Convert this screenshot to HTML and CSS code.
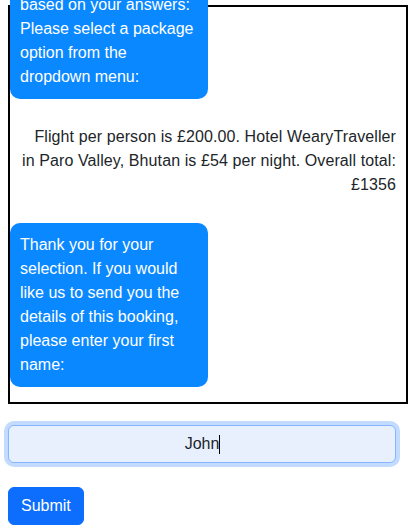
FILE: index.html
```html
<!DOCTYPE html>
<html lang="en">
<head>
<meta charset="utf-8">
<title>Booking chat</title>
<link rel="stylesheet" href="styles.css">
</head>
<body>
<main class="page">
  <section class="chat">
    <div class="msg bot">Here are the holiday packages we found for you<br>based on your answers: Please select a package option from the dropdown menu:</div>
    <div class="msg user">Flight per person is £200.00. Hotel WearyTraveller in Paro Valley, Bhutan is £54 per night. Overall total: £1356</div>
    <div class="msg bot">Thank you for your selection. If you would like us to send you the details of this booking, please enter your first name:</div>
  </section>
  <form class="reply">
    <div class="field">
      <input class="name-input" type="text" value="John">
      <span class="caret"></span>
    </div>
    <button class="submit" type="button">Submit</button>
  </form>
</main>
</body>
</html>
```
FILE: styles.css
```css
html, body {
  margin: 0;
  padding: 0;
  background: #fff;
}
body {
  font-family: "Liberation Sans", Arial, sans-serif;
  font-size: 16px;
  line-height: 24px;
  color: #212529;
}
.page {
  padding: 5px 6px 0 8px;
}
.chat {
  box-sizing: border-box;
  width: 400px;
  height: 399px;
  border: 2px solid #000;
  display: flex;
  flex-direction: column;
  justify-content: flex-end;
  gap: 16px;
  padding-bottom: 15px;
}
.msg {
  box-sizing: border-box;
  padding: 10px;
}
.bot {
  max-width: 50%;
  background: #0a88ff;
  color: #fff;
  border-radius: 10px;
  align-self: flex-start;
}
.user {
  text-align: right;
  align-self: stretch;
  letter-spacing: 0.1px;
}
.reply {
  display: flex;
  flex-direction: column;
  align-items: flex-start;
  gap: 24px;
  margin-top: 21px;
}
.field {
  position: relative;
  width: 388px;
}
.name-input {
  box-sizing: border-box;
  display: block;
  width: 100%;
  height: 38px;
  padding: 6px 12px;
  font: inherit;
  color: #212529;
  text-align: center;
  background: #e8f0fe;
  border: 1px solid #86b7fe;
  border-radius: 6px;
  box-shadow: 0 0 0 4px rgba(13, 110, 253, 0.25);
  outline: none;
}
.caret {
  position: absolute;
  left: calc(50% + 17px);
  top: 10px;
  width: 1px;
  height: 19px;
  background: #000;
}
.submit {
  box-sizing: border-box;
  height: 38px;
  padding: 6px 12px;
  font: inherit;
  color: #fff;
  background: #0d6efd;
  border: 1px solid #0d6efd;
  border-radius: 6px;
}
```
